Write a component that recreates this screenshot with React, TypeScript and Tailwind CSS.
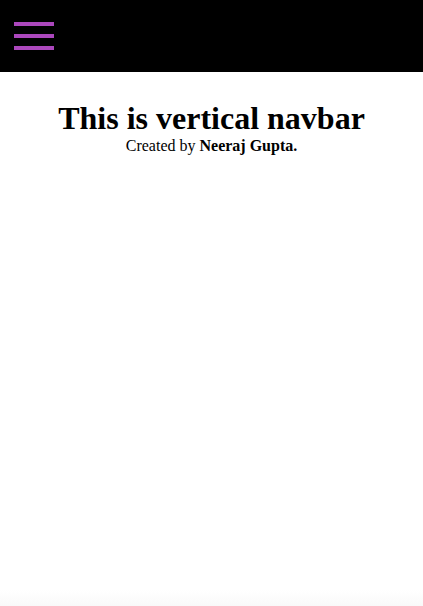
export default function App() {
  return (
    <div className="min-h-[606px] bg-white font-['Liberation_Serif',serif] text-black flex flex-col">
      <header className="h-[72px] bg-black flex items-center px-[14px]">
        <button className="w-10 flex flex-col gap-2" aria-label="menu">
          <span className="block h-1 w-10 bg-[#ab47bc]" />
          <span className="block h-1 w-10 bg-[#ab47bc]" />
          <span className="block h-1 w-10 bg-[#ab47bc]" />
        </button>
      </header>
      <main className="flex-1 text-center pt-[28px]">
        <h1 className="text-[32px] font-bold leading-[37px]">This is vertical navbar</h1>
        <p className="text-base leading-[18px]">
          Created by <b>Neeraj Gupta.</b>
        </p>
      </main>
      <div className="h-4 bg-gradient-to-b from-white to-[#f9f9f9]" />
    </div>
  )
}
